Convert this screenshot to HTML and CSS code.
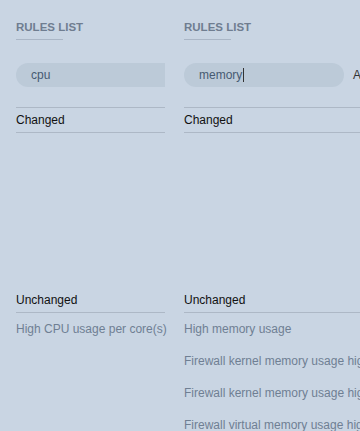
FILE: index.html
```html
<!DOCTYPE html>
<html>
<head>
<meta charset="utf-8">
<link rel="stylesheet" href="styles.css">
</head>
<body>
<div class="columns">
  <section class="col col-first">
    <h2 class="heading">RULES LIST</h2>
    <div class="search-row">
      <div class="search">cpu</div>
    </div>
    <div class="group-head">Changed</div>
    <div class="group-body empty"></div>
    <div class="group-head plain">Unchanged</div>
    <ul class="items">
      <li>High CPU usage per core(s)</li>
    </ul>
  </section>
  <section class="col col-second">
    <h2 class="heading">RULES LIST</h2>
    <div class="search-row">
      <div class="search">memory<span class="caret"></span></div>
      <span class="search-action">All</span>
    </div>
    <div class="group-head">Changed</div>
    <div class="group-body empty"></div>
    <div class="group-head plain">Unchanged</div>
    <ul class="items">
      <li>High memory usage</li>
      <li>Firewall kernel memory usage high</li>
      <li>Firewall kernel memory usage high</li>
      <li>Firewall virtual memory usage high</li>
    </ul>
  </section>
</div>
</body>
</html>
```
FILE: styles.css
```css
html, body {
  margin: 0;
  padding: 0;
  background: #c9d5e3;
  overflow: hidden;
  height: 431px;
}
body {
  font-family: "Liberation Sans", Arial, sans-serif;
  font-size: 12px;
  color: #111;
}
.columns {
  display: flex;
  gap: 19px;
  padding-left: 16px;
}
.col {
  flex: none;
}
.col-first {
  width: 149px;
}
.col-first .search-row {
  overflow: hidden;
}
.col-second {
  width: 260px;
}
.heading {
  margin: 0;
  padding-top: 20px;
  font-size: 11.5px;
  line-height: 14px;
  font-weight: bold;
  color: #6f7d90;
  height: 19px;
}
.heading::after {
  content: "";
  display: block;
  margin-top: 5px;
  width: 47px;
  height: 1px;
  background: #aab6c6;
}
.search-row {
  display: flex;
  align-items: center;
  margin-top: 24px;
  gap: 9px;
}
.search {
  flex: none;
  width: 160px;
  box-sizing: border-box;
  height: 24px;
  border-radius: 12px;
  background: #bccad8;
  padding-left: 15px;
  line-height: 24px;
  color: #475a72;
  font-size: 12px;
}
.caret {
  display: inline-block;
  width: 1px;
  height: 14px;
  background: #333;
  vertical-align: -3px;
  margin-left: 1px;
}
.search-action {
  color: #333;
  font-size: 12px;
}
.group-head {
  margin-top: 20px;
  border-top: 1px solid #adb8c6;
  border-bottom: 1px solid #adb8c6;
  height: 24px;
  line-height: 24px;
  color: #111;
}
.group-head.plain {
  margin-top: 0;
  border-top: none;
}
.group-body.empty {
  height: 155px;
}
.items {
  list-style: none;
  margin: 0;
  padding: 0;
}
.items li {
  height: 32px;
  line-height: 32px;
  white-space: nowrap;
  color: #6f7f93;
}
```
